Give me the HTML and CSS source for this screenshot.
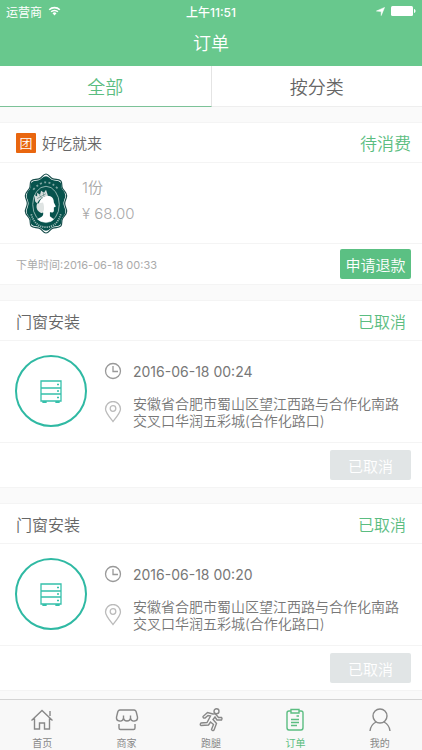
FILE: index.html
```
<!DOCTYPE html>
<html lang="zh-CN">
<head>
    <meta charset="UTF-8">
    <meta name="viewport" content="width=device-width, initial-scale=1">
    <title>订单</title>
    <link rel="stylesheet" href="styles.css">
</head>
<body>
<!-- 公用图标 -->
<svg class="symbols" aria-hidden="true">
    <symbol id="icon-cabinet" viewBox="0 0 22 23">
        <path d="M1 1h20v20H1zM1 8h20M1 14h20M3 21v1.500h3V21M16 21v1.500h3V21M17 4.500h2M17 11h2M17 17.500h2"/>
    </symbol>
    <symbol id="icon-clock" viewBox="0 0 18 18">
        <circle cx="9" cy="9" r="7.500"/>
        <path d="M9 4v5.500h5"/>
    </symbol>
    <symbol id="icon-pin" viewBox="0 0 18 22">
        <path d="M9 20.500C5 15.500 1.500 11.500 1.500 8a7.500 7.500 0 0 1 15 0c0 3.500-3.500 7.500-7.500 12.500z"/>
        <circle cx="9" cy="7.500" r="2.800"/>
    </symbol>
</svg>

<div class="wrap">
    <header class="header">
        <div class="status-bar">
            <div class="carrier">
                <span>运营商</span>
                <svg class="wifi" viewBox="0 0 14 11">
                    <path d="M1.200 4.200a8.200 8.200 0 0 1 11.600 0M3.300 6.400a5.200 5.200 0 0 1 7.400 0" fill="none" stroke="#fff" stroke-width="1.700"/>
                    <path d="M4.800 8a3.200 3.200 0 0 1 4.400 0L7 10.400z" fill="#fff"/>
                </svg>
            </div>
            <span class="time">上午11:51</span>
            <div class="power">
                <svg class="location" viewBox="0 0 10 10"><path d="M9.500.5L5.800 9.500V5L.5 4.500z" fill="#fff" stroke="#fff" stroke-width=".6"/></svg>
                <svg class="battery" viewBox="0 0 25 10">
                    <rect width="22" height="10" rx="1.500" fill="#fff"/>
                    <path d="M23 3c2 .6 2 3.400 0 4z" fill="#fff"/>
                </svg>
            </div>
        </div>
        <h1>订单</h1>
    </header>

    <div class="tabs">
        <button type="button" class="tab active">全部</button>
        <button type="button" class="tab">按分类</button>
    </div>

    <main class="list">
        <!-- 团购订单 -->
        <section class="order">
            <div class="order-head group-head">
                <span class="tag">团</span>
                <h2>好吃就来</h2>
                <span class="state">待消费</span>
            </div>
            <div class="goods">
                <svg class="shop-logo" viewBox="0 0 46 62" role="img" aria-label="店铺标志">
                    <path d="M23 1c3 0 4 4 7 5s6 0 8 2 0 5 2 8 4 4 4 7-2 5-2 8 2 5 2 8-2 4-4 7 0 6-2 8-5 1-8 2-4 5-7 5-4-4-7-5-6 0-8-2 0-5-2-8-4-4-4-7 2-5 2-8-2-5-2-8 2-4 4-7 0-6 2-8 5-1 8-2 4-5 7-5z" fill="#fff" stroke="#174d4b" stroke-width="1.200"/>
                    <path d="M23 4c3 0 3 3 7 4s5 0 7 2 0 5 2 7 3 4 3 6-2 5-2 8 2 5 2 8-1 3-3 6 0 5-2 7-4 1-7 2-4 4-7 4-4-3-7-4-5 0-7-2 0-5-2-7-3-4-3-6 2-5 2-8-2-5-2-8 1-4 3-6 0-5 2-7 4-1 7-2 4-4 7-4z" fill="#07534d" stroke="#07534d" stroke-width="1.500"/>
                    <ellipse cx="23" cy="32" rx="13.500" ry="18.500" fill="none" stroke="#b5cdca" stroke-width=".8"/>
                    <path d="M17 28c2-4 7-6 11-4 2 1 3 3 3 6l2 4-2 1v4c-1 2-3 1-4 1v4l4 3c-3 4-13 4-17 0 4-2 7-3 6-7-4-2-6-7-3-12z" fill="#fff"/>
                    <path d="M14 31c-2 5 1 9 5 10 3-3 2-8 1-11z" fill="#dfe4e3"/>
                    <path d="M12 29l-1-7 3 2 0-4 3 2 1-4 3 2 2-3 2 6c-5 1-9 3-11 8z" fill="#d9dfde"/>
                    <path d="M14 26l9-5M16 22l3 4M20 20l1 4" fill="none" stroke="#5c8783" stroke-width=".7"/>
                    <path d="M10 17q13-15 26 0" fill="none" stroke="#7fa5a1" stroke-width="1.800" stroke-dasharray="2 2.500"/>
                    <path d="M8 42q4 13 15 13t15-13" fill="none" stroke="#9dbab7" stroke-width="1.800" stroke-dasharray="1.200 1"/>
                </svg>
                <div class="goods-info">
                    <p>1份</p>
                    <p>¥ 68.00</p>
                </div>
            </div>
            <div class="order-foot">
                <span class="order-time">下单时间:2016-06-18 00:33</span>
                <button type="button" class="btn">申请退款</button>
            </div>
        </section>

        <!-- 服务订单 -->
        <section class="order">
            <div class="order-head">
                <h2>门窗安装</h2>
                <span class="state">已取消</span>
            </div>
            <div class="service">
                <div class="service-icon"><svg><use href="#icon-cabinet"/></svg></div>
                <div class="service-info">
                    <div class="row">
                        <svg class="clock"><use href="#icon-clock"/></svg>
                        <span class="date">2016-06-18 00:24</span>
                    </div>
                    <div class="row">
                        <svg class="pin"><use href="#icon-pin"/></svg>
                        <p class="address">安徽省合肥市蜀山区望江西路与合作化南路交叉口华润五彩城(合作化路口)</p>
                    </div>
                </div>
            </div>
            <div class="order-foot service-foot">
                <button type="button" class="btn" disabled>已取消</button>
            </div>
        </section>

        <section class="order">
            <div class="order-head">
                <h2>门窗安装</h2>
                <span class="state">已取消</span>
            </div>
            <div class="service">
                <div class="service-icon"><svg><use href="#icon-cabinet"/></svg></div>
                <div class="service-info">
                    <div class="row">
                        <svg class="clock"><use href="#icon-clock"/></svg>
                        <span class="date">2016-06-18 00:20</span>
                    </div>
                    <div class="row">
                        <svg class="pin"><use href="#icon-pin"/></svg>
                        <p class="address">安徽省合肥市蜀山区望江西路与合作化南路交叉口华润五彩城(合作化路口)</p>
                    </div>
                </div>
            </div>
            <div class="order-foot service-foot">
                <button type="button" class="btn" disabled>已取消</button>
            </div>
        </section>
    </main>

    <!-- 底部导航 -->
    <nav class="nav">
        <a href="#home">
            <svg viewBox="0 0 24 24"><path d="M1.500 12.500L12 2.500l10.500 10M4.500 10.500v10.500h5v-6h5v6h5V10.500M20 3v5"/></svg>
            <span>首页</span>
        </a>
        <a href="#shop">
            <svg viewBox="0 0 24 24"><path d="M5 2h14q2 0 2.500 3l1 4c.5 5-6.500 5.500-7 1V7.500V10c-.5 4-6.500 4-7 0V7.500V10c-.5 4.500-7.500 4-7-1l1-4Q3 2 5 2zM4 16v4q0 1.500 1.500 1.500h13Q20 21.500 20 20v-4"/></svg>
            <span>商家</span>
        </a>
        <a href="#run">
            <svg viewBox="0 0 24 24"><circle cx="17.500" cy="3.200" r="2.500"/><path d="M14 6L8.500 4.500 4 8.500q0 2 2 1.500L9 7.500l2.500.5-3.500 6.500-6 .5q-1.500 1.500 0 2.500l7.500-.5 2-3 3 2.500-2 5q1 2 2.500.5l2.500-6.500-3.500-4L16 9l2 3h4.500q1-1.500 0-2.500H19.500L17 6.500q-1-1-3-.5z"/></svg>
            <span>跑腿</span>
        </a>
        <a href="#order" class="on">
            <svg viewBox="0 0 24 24"><path d="M8 3H6Q4 3 4 5v14.500Q4 22 6 22h12q2 0 2-2.500V5q0-2-2-2h-2M8 1.500h8v3.500H8zM13.500 8H16M8 11.500h8M8 14.500h8M8 17.500h6"/></svg>
            <span>订单</span>
        </a>
        <a href="#mine">
            <svg viewBox="0 0 24 24"><circle cx="12" cy="8" r="7"/><path d="M2 23q.5-6 6-9M22 23q-.5-6-6-9"/></svg>
            <span>我的</span>
        </a>
    </nav>
</div>
</body>
</html>
```

FILE: styles.css
```
* { margin: 0; padding: 0; box-sizing: border-box;}
body { font-family: Inter, "Noto Sans CJK SC", sans-serif; font-weight: 350; color: #666; background-color: #fafafa;}
button { font: inherit; color: inherit; border: 0; background: none;}
h1, h2 { font-weight: 350;}
a { text-decoration: none; color: inherit;}
svg { display: block; flex: none;}
.symbols { width: 0; height: 0; position: absolute;}
.wrap { min-height: 100vh; display: flex; flex-direction: column;}

/*头部*/
.header { background-color: #68c88d; color: #fff; text-align: center;}
.status-bar { display: grid; grid-template-columns: 1fr auto 1fr; align-items: center; height: 22px; padding: 0 6px; font-size: 12px; font-weight: 400;}
.time { font-weight: 500;}
.carrier { display: flex; align-items: center; gap: 6px;}
.wifi { width: 13px; height: 10px;}
.power { display: flex; align-items: center; justify-content: flex-end; gap: 6px;}
.location { width: 9px; height: 9px;}
.battery { width: 25px; height: 10px;}
.header h1 { font-size: 18px; line-height: 44px;}

/*切换*/
.tabs { display: flex; height: 41px; background-color: #fff;}
.tab { flex: 1; font-size: 18px; padding-bottom: 1px; border-bottom: 1px solid #eee;}
.tab.active { color: #5bbd81; border-bottom: 1px solid #7cc298; border-right: 1px solid #e4e4e4;}

/*订单列表*/
.list { flex: 1; padding: 15px 0 60px;}
.order { background-color: #fff; border-top: 1px solid #f4f4f4; border-bottom: 1px solid #f4f4f4; margin-bottom: 15px;}
.order-head { display: flex; align-items: center; height: 40px; padding: 0 16px; border-bottom: 1px solid #f4f4f4;}
.order-head h2 { flex: 1; font-size: 16px;}
.state { font-size: 16px; color: #5bbd81;}
.group-head { padding-right: 11px; gap: 6px;}
.group-head h2 { font-size: 15px;}
.group-head .state { font-size: 17px;}
.tag { width: 20px; height: 20px; line-height: 20px; text-align: center; font-size: 13px; color: #fff; background-color: #e9660f; border-radius: 1px;}
.goods { display: flex; gap: 13px; padding: 10px 23px 9px; border-bottom: 1px solid #f4f4f4;}
.shop-logo { width: 46px; height: 61px;}
.goods-info { font-size: 15px; line-height: 26px; color: #aaa; padding-top: 2px;}
.order-foot { display: flex; align-items: center; justify-content: flex-end; padding: 5px 11px 5px 16px;}
.service-foot { padding: 7px 11px;}
.order-time { flex: 1; font-size: 11px; color: #aaa; font-weight: 400;}
.btn { min-width: 71px; height: 30px; font-size: 15px; color: #fff; background-color: #5bc083; border-radius: 2px;}
.btn:disabled { min-width: 81px; background-color: #e1e5e6;}

/*服务信息*/
.service { display: flex; gap: 17px; padding: 14px 16px 13px 15px; border-bottom: 1px solid #f4f4f4;}
.service-icon { flex: none; display: flex; align-items: center; justify-content: center; width: 72px; height: 72px; border: 2px solid #2fb9a3; border-radius: 50%;}
.service-icon svg { width: 22px; height: 23px; fill: none; stroke: #35c0ab; stroke-width: 1.3;}
.service-info { flex: 1; font-size: 14px; color: #777;}
.row { display: flex; align-items: center; gap: 11px;}
.row:first-child { height: 32px; margin-bottom: 8px;}
.date { font-weight: 400;}
.clock, .pin { width: 18px; height: 22px; fill: none; stroke: #999; stroke-width: 1.3;}
.clock { height: 18px;}
.pin { stroke: #bbb;}
.address { line-height: 17px;}

/*底部*/
.nav { position: fixed; left: 0; right: 0; bottom: 0; height: 51px; display: flex; background-color: #f8f8f8; border-top: 1px solid #d4d4d4;}
.nav a { flex: 1; display: flex; flex-direction: column; align-items: center; padding-top: 8px; font-size: 10px; line-height: 14px; font-weight: 400; color: #888;}
.nav svg { width: 24px; height: 24px; margin-bottom: 4px; fill: none; stroke: currentColor; stroke-width: 1.4;}
.nav .on { color: #5bbd81;}
```
